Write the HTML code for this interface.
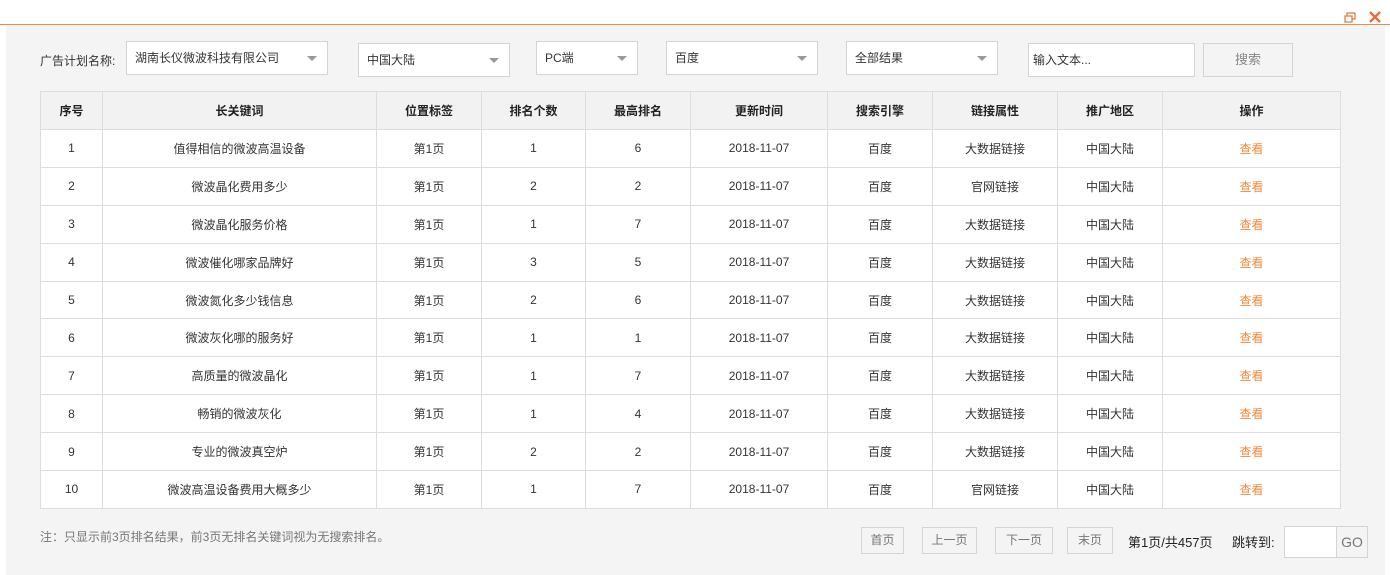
<!DOCTYPE html>
<html><head><meta charset="utf-8"><style>
*{box-sizing:border-box;margin:0;padding:0}
body{width:1390px;height:575px;background:#fff;font-family:"Liberation Sans","Noto Sans CJK SC",sans-serif;font-size:12px;color:#333;position:relative;overflow:hidden}
.line{position:absolute;left:0;top:23px;width:1390px;height:2px;background:#f5a56a}
.line2{position:absolute;left:0;top:24px;width:1390px;height:1px;background:#f08a3c}
.panel{position:absolute;left:6px;top:25px;width:1379px;height:550px;background:#f4f4f4}
.ab{position:absolute}
.sel{position:absolute;background:#fff;border:1px solid #d4d4d4;height:34px;line-height:32px;padding-left:8px;font-size:12px}
.arr:after{content:"";position:absolute;right:10px;top:14px;border-left:5px solid transparent;border-right:5px solid transparent;border-top:5px solid #999}
table{position:absolute;left:40px;top:91px;border-collapse:collapse;background:#fff}
td,th{border:1px solid #ddd;text-align:center;height:38px;font-size:12px;font-weight:normal}
td{height:37.9px}
th{background:#f2f2f2;font-weight:bold;color:#222}
.v{color:#f08a3c}
.btn{position:absolute;top:527px;height:27px;border:1px solid #d4d4d4;line-height:25px;text-align:center;color:#777;font-size:12px}
</style></head><body>
<div class="panel"></div>
<div class="line2"></div>
<svg class="ab" style="left:1344px;top:12px" width="12" height="11"><rect x="3" y="1" width="8" height="6" fill="none" stroke="#e0763a" stroke-width="1.2"/><rect x="1" y="4" width="7" height="6" fill="#fff" stroke="#e0763a" stroke-width="1.2"/></svg>
<svg class="ab" style="left:1368px;top:10px" width="14" height="14"><path d="M2 2L12 12M12 2L2 12" stroke="#f06a3a" stroke-width="2.4"/></svg>
<div class="ab" style="left:40px;top:52px">广告计划名称:</div>
<div class="sel arr" style="left:126px;top:41px;width:202px">湖南长仪微波科技有限公司</div>
<div class="sel arr" style="left:358px;top:43px;width:152px">中国大陆</div>
<div class="sel arr" style="left:536px;top:41px;width:102px">PC端</div>
<div class="sel arr" style="left:666px;top:41px;width:152px">百度</div>
<div class="sel arr" style="left:846px;top:41px;width:152px">全部结果</div>
<div class="sel" style="left:1028px;top:43px;width:167px;padding-left:4px">输入文本...</div>
<div class="ab" style="left:1203px;top:43px;width:90px;height:34px;border:1px solid #d4d4d4;line-height:32px;text-align:center;color:#888;font-size:13px;background:#f4f4f4">搜索</div>
<table>
<tr><th style="width:62px">序号</th><th style="width:274px">长关键词</th><th style="width:105px">位置标签</th><th style="width:104px">排名个数</th><th style="width:105px">最高排名</th><th style="width:137px">更新时间</th><th style="width:105px">搜索引擎</th><th style="width:125px">链接属性</th><th style="width:105px">推广地区</th><th style="width:178px">操作</th></tr>
<tr><td>1</td><td>值得相信的微波高温设备</td><td>第1页</td><td>1</td><td>6</td><td>2018-11-07</td><td>百度</td><td>大数据链接</td><td>中国大陆</td><td class="v">查看</td></tr>
<tr><td>2</td><td>微波晶化费用多少</td><td>第1页</td><td>2</td><td>2</td><td>2018-11-07</td><td>百度</td><td>官网链接</td><td>中国大陆</td><td class="v">查看</td></tr>
<tr><td>3</td><td>微波晶化服务价格</td><td>第1页</td><td>1</td><td>7</td><td>2018-11-07</td><td>百度</td><td>大数据链接</td><td>中国大陆</td><td class="v">查看</td></tr>
<tr><td>4</td><td>微波催化哪家品牌好</td><td>第1页</td><td>3</td><td>5</td><td>2018-11-07</td><td>百度</td><td>大数据链接</td><td>中国大陆</td><td class="v">查看</td></tr>
<tr><td>5</td><td>微波氮化多少钱信息</td><td>第1页</td><td>2</td><td>6</td><td>2018-11-07</td><td>百度</td><td>大数据链接</td><td>中国大陆</td><td class="v">查看</td></tr>
<tr><td>6</td><td>微波灰化哪的服务好</td><td>第1页</td><td>1</td><td>1</td><td>2018-11-07</td><td>百度</td><td>大数据链接</td><td>中国大陆</td><td class="v">查看</td></tr>
<tr><td>7</td><td>高质量的微波晶化</td><td>第1页</td><td>1</td><td>7</td><td>2018-11-07</td><td>百度</td><td>大数据链接</td><td>中国大陆</td><td class="v">查看</td></tr>
<tr><td>8</td><td>畅销的微波灰化</td><td>第1页</td><td>1</td><td>4</td><td>2018-11-07</td><td>百度</td><td>大数据链接</td><td>中国大陆</td><td class="v">查看</td></tr>
<tr><td>9</td><td>专业的微波真空炉</td><td>第1页</td><td>2</td><td>2</td><td>2018-11-07</td><td>百度</td><td>大数据链接</td><td>中国大陆</td><td class="v">查看</td></tr>
<tr><td>10</td><td>微波高温设备费用大概多少</td><td>第1页</td><td>1</td><td>7</td><td>2018-11-07</td><td>百度</td><td>官网链接</td><td>中国大陆</td><td class="v">查看</td></tr>
</table>
<div class="ab" style="left:40px;top:528px;color:#777">注：只显示前3页排名结果，前3页无排名关键词视为无搜索排名。</div>
<div class="btn" style="left:861px;width:43px">首页</div>
<div class="btn" style="left:922px;width:55px">上一页</div>
<div class="btn" style="left:995px;width:58px">下一页</div>
<div class="btn" style="left:1067px;width:46px">末页</div>
<div class="ab" style="left:1128px;top:532px;font-size:13px;color:#222">第1页/共457页</div>
<div class="ab" style="left:1232px;top:532px;font-size:13px;color:#222">跳转到:</div>
<div class="ab" style="left:1284px;top:526px;width:84px;height:32px;border:1px solid #d4d4d4;background:#fff"></div>
<div class="ab" style="left:1336px;top:526px;width:32px;height:32px;border:1px solid #d4d4d4;background:#f4f4f4;line-height:30px;text-align:center;color:#777;font-size:14px">GO</div>
</body></html>
